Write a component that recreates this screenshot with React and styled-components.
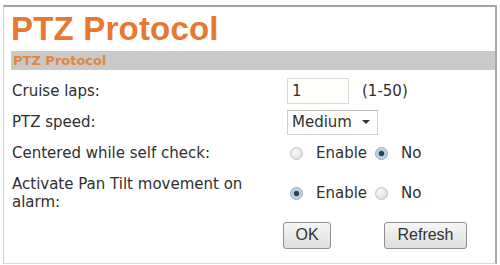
import React from "react";
import styled, { createGlobalStyle } from "styled-components";

const GlobalStyle = createGlobalStyle`
  html, body {
    margin: 0;
    padding: 0;
    background: #fff;
  }
  body {
    font-family: "DejaVu Sans", Verdana, sans-serif;
  }
`;

const Frame = styled.div`
  box-sizing: border-box;
  margin: 5px 0 0 3px;
  width: 494px;
  height: 259px;
  border-top: 2px solid #a2a2a2;
  border-left: 1px solid #cfcfcf;
  border-right: 2px solid #a8a8a8;
  border-bottom: 1px solid #dcdcdc;
  padding-left: 7px;
`;

const Title = styled.h1`
  margin: 0;
  padding-top: 5px;
  height: 31px;
  font-family: "Liberation Sans", Arial, sans-serif;
  font-size: 33px;
  line-height: 33px;
  font-weight: bold;
  letter-spacing: 0.2px;
  color: #e8782f;
`;

const Band = styled.div`
  margin-top: 8px;
  height: 19px;
  padding-left: 2px;
  background: #c9c9c9;
  font-size: 13px;
  line-height: 20px;
  font-weight: bold;
  color: #e4863a;
`;

const Form = styled.div`
  margin-top: 6px;
`;

const Row = styled.div`
  display: grid;
  grid-template-columns: 276px 1fr;
  align-items: center;
  height: ${(p) => p.$h}px;
`;

const Label = styled.div`
  padding-left: 1px;
  max-width: 250px;
  font-size: 15px;
  line-height: 18px;
  color: #2f2f2f;
`;

const Controls = styled.div`
  display: flex;
  align-items: center;
  font-size: 15px;
  color: #2f2f2f;
`;

const TextInput = styled.div`
  box-sizing: border-box;
  width: 62px;
  height: 26px;
  padding-left: 4px;
  border: 1px solid #dadad6;
  background: #fffffb;
  line-height: 24px;
`;

const Hint = styled.span`
  margin-left: 13px;
`;

const Select = styled.div`
  box-sizing: border-box;
  display: flex;
  align-items: center;
  justify-content: space-between;
  width: 91px;
  height: 25px;
  padding: 0 7px 0 4px;
  border: 1px solid #cfcfcf;
  border-top-color: #b8b8b8;
  background: #fff;
`;

const Caret = styled.span`
  width: 0;
  height: 0;
  border-left: 4px solid transparent;
  border-right: 4px solid transparent;
  border-top: 4px solid #333;
`;

const RadioGroup = styled.div`
  display: flex;
  align-items: center;
  padding-left: 3px;
`;

const Dot = styled.span`
  box-sizing: border-box;
  display: inline-block;
  width: 13px;
  height: 13px;
  border-radius: 50%;
  border: 1px solid ${(p) => (p.$on ? "#8aa9c2" : "#c2c2c2")};
  background: ${(p) =>
    p.$on
      ? "radial-gradient(circle, #2b4558 0 2.4px, #a9c3d8 2.9px, #e6eef5 100%)"
      : "radial-gradient(circle at 40% 35%, #fafafa, #d6d6d6)"};
  margin-right: 13px;
`;

const Option = styled.label`
  display: flex;
  align-items: center;
  margin-right: 8px;
`;

const Button = styled.button`
  box-sizing: border-box;
  height: 27px;
  width: ${(p) => p.$w}px;
  padding: 0;
  border: 1px solid #8e8e8e;
  border-radius: 3px;
  background: linear-gradient(#f6f6f6, #dedede);
  font-family: "Liberation Sans", Arial, sans-serif;
  font-size: 16px;
  color: #333;
`;

const Buttons = styled.div`
  display: flex;
  gap: 53px;
  margin-left: -4px;
`;

const Radio = ({ on, children }) => (
  <Option>
    <Dot $on={on} />
    {children}
  </Option>
);

export default function App() {
  return (
    <>
      <GlobalStyle />
      <Frame>
        <Title>PTZ Protocol</Title>
        <Band>PTZ Protocol</Band>
        <Form>
          <Row $h={30}>
            <Label>Cruise laps:</Label>
            <Controls>
              <TextInput>1</TextInput>
              <Hint>(1-50)</Hint>
            </Controls>
          </Row>
          <Row $h={32}>
            <Label>PTZ speed:</Label>
            <Controls>
              <Select>
                Medium
                <Caret />
              </Select>
            </Controls>
          </Row>
          <Row $h={30}>
            <Label>Centered while self check:</Label>
            <Controls>
              <RadioGroup>
                <Radio>Enable</Radio>
                <Radio on>No</Radio>
              </RadioGroup>
            </Controls>
          </Row>
          <Row $h={50}>
            <Label>Activate Pan Tilt movement on alarm:</Label>
            <Controls>
              <RadioGroup>
                <Radio on>Enable</Radio>
                <Radio>No</Radio>
              </RadioGroup>
            </Controls>
          </Row>
          <Row $h={34}>
            <div />
            <Controls>
              <Buttons>
                <Button $w={48}>OK</Button>
                <Button $w={83}>Refresh</Button>
              </Buttons>
            </Controls>
          </Row>
        </Form>
      </Frame>
    </>
  );
}
